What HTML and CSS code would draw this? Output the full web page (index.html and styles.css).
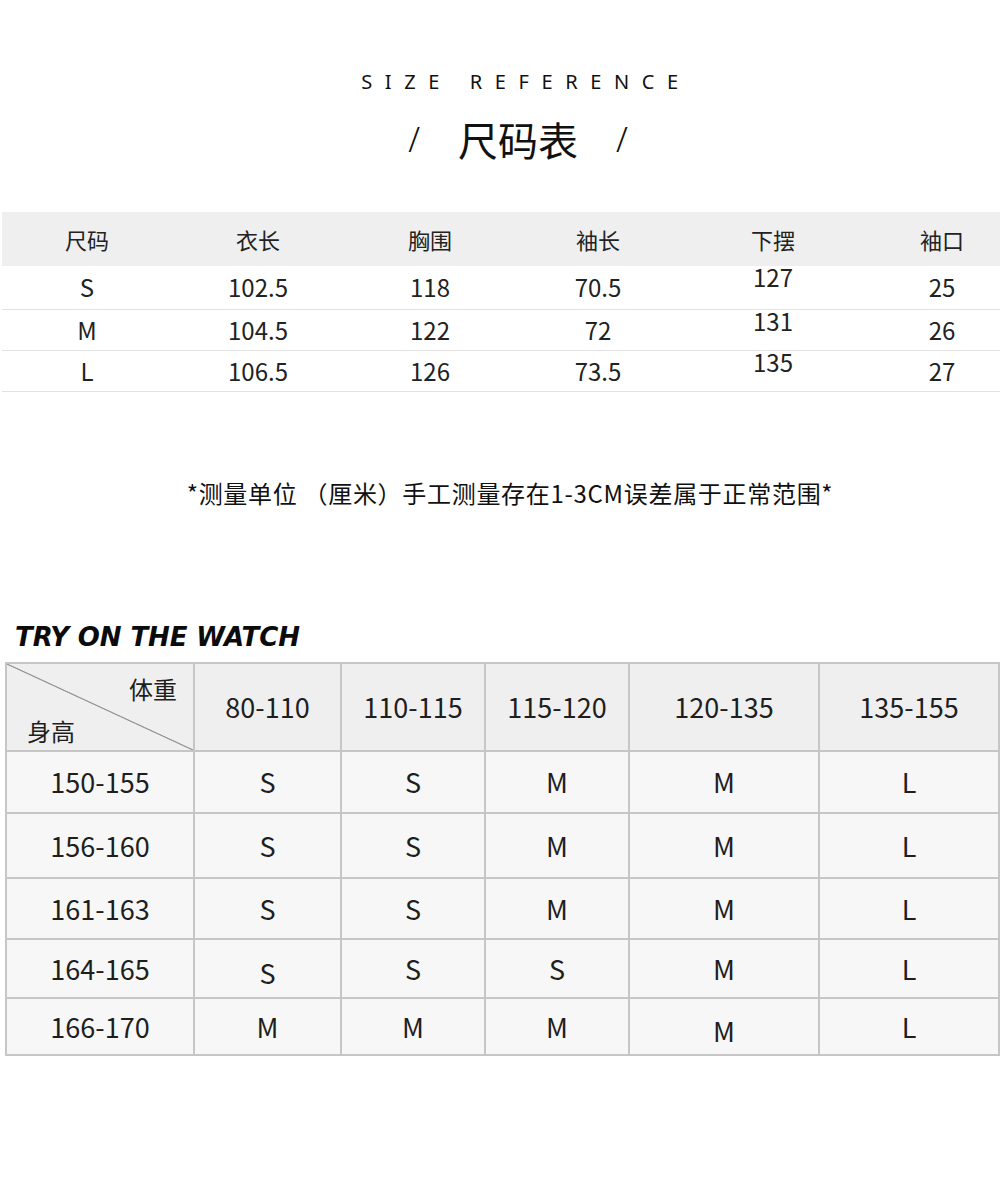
FILE: index.html
```html
<!DOCTYPE html>
<html lang="zh">
<head>
<meta charset="utf-8">
<link rel="stylesheet" href="styles.css">
</head>
<body>
<div class="page">
  <header class="head">
    <div class="en">SIZE REFERENCE</div>
    <div class="cn"><span class="slash">/</span><span class="cn-t">尺码表</span><span class="slash">/</span></div>
  </header>

  <table class="size">
    <colgroup>
      <col class="c1"><col class="c2"><col class="c3"><col class="c4"><col class="c5"><col class="c6">
    </colgroup>
    <thead>
      <tr><th>尺码</th><th>衣长</th><th>胸围</th><th>袖长</th><th>下摆</th><th class="last">袖口</th></tr>
    </thead>
    <tbody>
      <tr><td>S</td><td>102.5</td><td>118</td><td>70.5</td><td class="hi">127</td><td class="last">25</td></tr>
      <tr><td>M</td><td>104.5</td><td>122</td><td>72</td><td class="hi">131</td><td class="last">26</td></tr>
      <tr><td>L</td><td>106.5</td><td>126</td><td>73.5</td><td class="hi">135</td><td class="last">27</td></tr>
    </tbody>
  </table>

  <p class="note">*测量单位 （厘米）手工测量存在1-3CM误差属于正常范围*</p>

  <h2 class="try">TRY ON THE WATCH</h2>

  <table class="fit">
    <colgroup>
      <col class="f1"><col class="f2"><col class="f3"><col class="f4"><col class="f5"><col class="f6">
    </colgroup>
    <thead>
      <tr>
        <th class="diag"><div class="diag-in"><span class="w">体重</span><span class="h">身高</span></div></th>
        <th>80-110</th><th>110-115</th><th>115-120</th><th>120-135</th><th>135-155</th>
      </tr>
    </thead>
    <tbody>
      <tr class="r1"><td>150-155</td><td>S</td><td>S</td><td>M</td><td>M</td><td>L</td></tr>
      <tr class="r2"><td>156-160</td><td>S</td><td>S</td><td>M</td><td>M</td><td>L</td></tr>
      <tr class="r3"><td>161-163</td><td>S</td><td>S</td><td>M</td><td>M</td><td>L</td></tr>
      <tr class="r4"><td>164-165</td><td class="low">S</td><td>S</td><td>S</td><td>M</td><td>L</td></tr>
      <tr class="r5"><td>166-170</td><td>M</td><td>M</td><td>M</td><td class="low">M</td><td>L</td></tr>
    </tbody>
  </table>
</div>
</body>
</html>
```

FILE: styles.css
```css
* { box-sizing: border-box; }
html, body { margin: 0; padding: 0; background: #fff; }
body {
  font-family: "Noto Sans CJK SC", "Noto Sans", sans-serif;
  color: #1e1e1e;
  width: 1000px;
  overflow: hidden;
}
.page { width: 1000px; padding-top: 66px; padding-bottom: 140px; }

.head { text-align: center; }
.en {
  font-family: "Noto Sans", sans-serif;
  font-size: 20px;
  line-height: 32px;
  letter-spacing: 12.6px;
  padding-left: 52px;
  color: #111;
}
.cn {
  margin-top: 18px;
  display: flex;
  justify-content: center;
  align-items: center;
  gap: 38px;
  padding-left: 36px;
  font-size: 40px;
  line-height: 46px;
  color: #111;
}
.slash { font-family: "Noto Sans", sans-serif; font-weight: 300; font-size: 34px; }

.size {
  margin-top: 50px;
  margin-left: 2px;
  width: 998px;
  border-collapse: collapse;
  table-layout: fixed;
  font-size: 24px;
}
.size .c1 { width: 170px; }
.size .c2 { width: 172px; }
.size .c3 { width: 172px; }
.size .c4 { width: 164px; }
.size .c5 { width: 186px; }
.size .c6 { width: 134px; }
.size th {
  background: #efefef;
  font-weight: 400;
  font-size: 22px;
  height: 54px;
  padding: 0;
  text-align: center;
  color: #222;
}
.size td {
  text-align: center;
  padding: 0;
  height: 41px;
  line-height: 24px;
  border-bottom: 1px solid #e2e2e2;
  color: #222;
}
.size tbody tr:first-child td { height: 43px; }
.size .last { padding-left: 18px; }
.size td.hi { vertical-align: top; padding-top: 0; line-height: 22px; }

.note {
  margin: 86px 0 0;
  text-align: center;
  font-size: 24px;
  letter-spacing: 0.7px;
  line-height: 30px;
  color: #111;
  padding-left: 20px;
}

.try {
  margin: 112px 0 0 15px;
  font-family: "DejaVu Sans", sans-serif;
  font-weight: 700;
  font-style: italic;
  font-size: 26px;
  line-height: 34px;
  color: #0b0b0b;
  letter-spacing: -0.1px;
}

.fit {
  margin-top: 8px;
  margin-left: 5px;
  width: 993px;
  border-collapse: collapse;
  table-layout: fixed;
  font-size: 27px;
  color: #1e1e1e;
}
.fit .f1 { width: 188px; }
.fit .f2 { width: 147px; }
.fit .f3 { width: 144px; }
.fit .f4 { width: 144px; }
.fit .f5 { width: 190px; }
.fit .f6 { width: 180px; }
.fit th, .fit td {
  border: 2px solid #c6c6c6;
  text-align: center;
  padding: 0;
  font-weight: 400;
}
.fit th { background: #efefef; height: 88px; }
.fit td { background: #f7f7f7; }
.fit .r1 td { height: 62px; }
.fit .r2 td { height: 65px; }
.fit .r3 td { height: 61px; }
.fit .r4 td { height: 59px; }
.fit .r5 td { height: 57px; }
.fit td.low { padding-top: 9px; }

.fit th.diag {
  background:
    linear-gradient(to top right, transparent calc(50% - 1px), #9a9a9a calc(50% - 0.3px), #9a9a9a calc(50% + 0.3px), transparent calc(50% + 1px)),
    #efefef;
}
.diag-in {
  height: 84px;
  display: flex;
  flex-direction: column;
  justify-content: space-between;
  font-size: 24px;
  line-height: 28px;
  padding: 10px 16px 4px 20px;
}
.diag-in .w { align-self: flex-end; }
.diag-in .h { align-self: flex-start; }
```
